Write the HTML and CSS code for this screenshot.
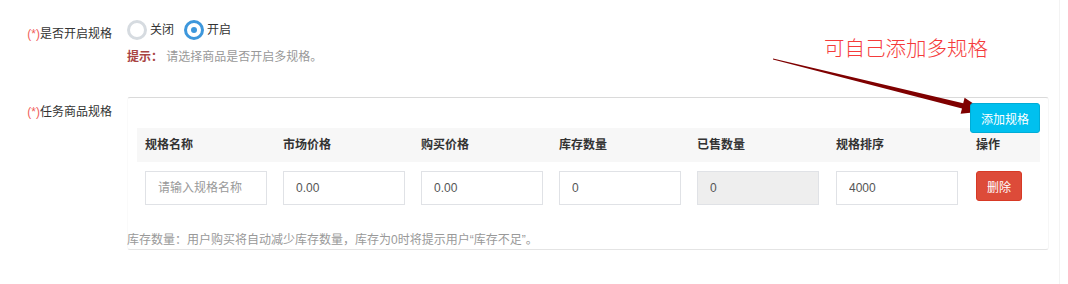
FILE: index.html
```html
<!DOCTYPE html>
<html lang="zh-CN">
<head>
<meta charset="utf-8">
<title>规格</title>
<link rel="stylesheet" href="styles.css">
</head>
<body>
<div class="page">
  <div class="form-row row-switch">
    <label class="label"><span class="req">(*)</span>是否开启规格</label>
    <div class="control">
      <div class="radios">
        <span class="radio"><i class="dot off"></i>关闭</span>
        <span class="radio"><i class="dot on"></i>开启</span>
      </div>
      <p class="hint"><b>提示：</b> 请选择商品是否开启多规格。</p>
    </div>
  </div>

  <div class="form-row row-spec">
    <label class="label"><span class="req">(*)</span>任务商品规格</label>
    <div class="panel">
      <div class="toolbar"><button class="btn-add">添加规格</button></div>
      <div class="spec-table">
        <div class="th">规格名称</div>
        <div class="th">市场价格</div>
        <div class="th">购买价格</div>
        <div class="th">库存数量</div>
        <div class="th">已售数量</div>
        <div class="th">规格排序</div>
        <div class="th">操作</div>
        <div class="td"><input class="input" placeholder="请输入规格名称"></div>
        <div class="td"><input class="input" value="0.00"></div>
        <div class="td"><input class="input" value="0.00"></div>
        <div class="td"><input class="input" value="0"></div>
        <div class="td"><input class="input readonly" value="0" readonly></div>
        <div class="td"><input class="input" value="4000"></div>
        <div class="td"><button class="btn-del">删除</button></div>
      </div>
      <p class="help">库存数量：用户购买将自动减少库存数量，库存为0时将提示用户“库存不足”。</p>
    </div>
  </div>

  <div class="note">可自己添加多规格</div>
  <svg class="arrow" width="1068" height="284" viewBox="0 0 1068 284">
    <polygon fill="#7f0000" points="773,58.4 963.2,103.2 964.6,97.8 985,111.2 960.6,113.8 962,108.4 773,59.6"/>
  </svg>
</div>
</body>
</html>
```
FILE: styles.css
```css
* { box-sizing: border-box; }
html, body { margin: 0; padding: 0; background: #fff; }
body {
  font-family: "Liberation Sans", "Noto Sans CJK SC", sans-serif;
  font-size: 12px;
  color: #333;
}
.page {
  position: relative;
  width: 1060px;
  height: 284px;
  border-right: 1px solid #f3f3f3;
}
.form-row { display: flex; }
.label {
  width: 112px;
  margin-right: 15px;
  text-align: right;
  line-height: 18px;
  flex: none;
}
.req { color: #f0605a; }
.row-switch { padding-top: 20px; }
.row-switch .label { padding-top: 5px; }
.radios { display: flex; align-items: center; height: 20px; }
.radio { display: flex; align-items: center; line-height: 20px; margin-right: 10px; }
.dot {
  display: inline-block;
  width: 20px; height: 20px;
  border-radius: 50%;
  margin-right: 3px;
  position: relative;
}
.dot.off { border: 3px solid #d6dbe0; background: #fff; }
.dot.on { border: 3px solid #3d97dc; background: #fff; }
.dot.on::after {
  content: "";
  position: absolute;
  left: 4px; top: 4px;
  width: 6px; height: 6px;
  border-radius: 50%;
  background: #3d97dc;
}
.hint { margin: 8px 0 0; line-height: 18px; color: #999; }
.hint b { color: #a94442; }

.row-spec { margin-top: 31px; }
.row-spec .label { padding-top: 6px; }
.panel {
  width: 922px;
  border-top: 1px solid #dadada;
  border-bottom: 1px solid #e4e4e4;
  border-left: 1px solid #fafafa;
  border-right: 1px solid #f6f6f6;
  border-radius: 3px;
}
.toolbar {
  display: flex;
  justify-content: flex-end;
  padding: 5px 8px 0 0;
  margin-bottom: -5px;
  position: relative;
  z-index: 1;
}
.btn-add {
  height: 30px;
  padding: 0 10px;
  border: 1px solid #00acd6;
  border-radius: 3px;
  background: #00c0ef;
  color: #fff;
  font: inherit;
  font-size: 12px;
}
.spec-table {
  margin: 0 8px 0 9px;
  display: grid;
  grid-template-columns: 138px 138px 138px 138px 139px 140px 72px;
}
.th {
  height: 34px;
  line-height: 34px;
  padding: 0 8px;
  background: #f7f7f7;
  font-weight: bold;
}
.td { padding: 9px 8px; }
.input {
  display: block;
  width: 122px;
  height: 34px;
  padding: 6px 12px;
  border: 1px solid #e0e2e6;
  border-radius: 0;
  font: inherit;
  font-size: 12px;
  color: #555;
  background: #fff;
  outline: none;
}
.input::placeholder { color: #999; }
.input.readonly { background: #eee; }
.btn-del {
  display: block;
  height: 30px;
  padding: 0 10px;
  border: 1px solid #d73925;
  border-radius: 3px;
  background: #dd4b39;
  color: #fff;
  font: inherit;
  font-size: 12px;
}
.help {
  margin: 17px 0 0 -1px;
  line-height: 18px;
  color: #999;
}
.note {
  position: absolute;
  left: 824px;
  top: 33px;
  font-size: 20.5px;
  line-height: 28px;
  color: #f53b3b;
  font-family: "Noto Sans CJK SC", sans-serif;
  font-weight: 300;
}
.arrow { position: absolute; left: 0; top: 0; pointer-events: none; }
```
